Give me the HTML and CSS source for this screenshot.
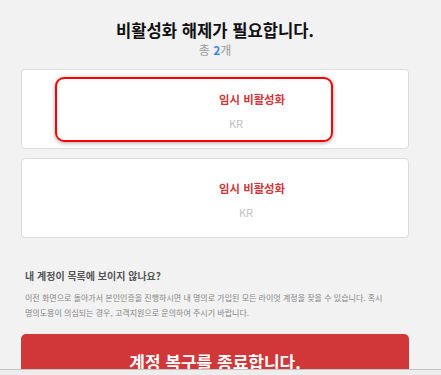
FILE: index.html
```html
<!DOCTYPE html>
<html lang="ko">
<head>
  <meta charset="UTF-8" />
  <meta name="viewport" content="width=device-width, initial-scale=1.0"/>
  <title>계정 복구</title>
  <link rel="stylesheet" href="styles.css">
</head>
<body>

  <main class="page">
    <h1 class="title">비활성화 해제가 필요합니다.</h1>
    <p class="count">총 <b>2</b>개</p>

    <ul class="accounts">
      <li class="account">
        <div class="account-thumb"></div>
        <div class="account-info">
          <span class="status">임시 비활성화</span>
          <span class="tag tag-first">KR</span>
        </div>
        <div class="highlight"></div>
      </li>
      <li class="account">
        <div class="account-thumb"></div>
        <div class="account-info">
          <span class="status">임시 비활성화</span>
          <span class="tag tag-second">KR</span>
        </div>
      </li>
    </ul>

    <section class="help">
      <h2>내 계정이 목록에 보이지 않나요?</h2>
      <p>이전 화면으로 돌아가서 본인인증을 진행하시면 내 명의로 가입된 모든 라이엇 계정을 찾을 수 있습니다. 혹시 명의도용이 의심되는 경우, 고객지원으로 문의하여 주시기 바랍니다.</p>
    </section>

    <button class="quit-btn">계정 복구를 종료합니다.</button>
  </main>

  <div class="scroll-track"></div>

</body>
</html>
```

FILE: styles.css
```css
body, html {
  margin: 0;
  padding: 0;
  height: 100%;
  overflow: hidden;
  background: #f2f2f2;
  font-family: "Noto Sans CJK KR", "Noto Sans", sans-serif;
}

.page {
  padding: 18px 32px 0 21px;
  display: flex;
  flex-direction: column;
}

.title {
  margin: 0;
  font-size: 16.6px;
  line-height: 24px;
  font-weight: 700;
  color: #111;
  text-align: center;
}

.count {
  margin: 0;
  font-size: 12px;
  line-height: 16px;
  color: #999;
  text-align: center;
}

.count b {
  color: #3f86f0;
}

.accounts {
  list-style: none;
  margin: 11px 0 0;
  padding: 0;
  display: flex;
  flex-direction: column;
  gap: 9px;
}

.account {
  position: relative;
  height: 78px;
  background: #fff;
  border: 1px solid #dcdcdc;
  border-radius: 4px;
  display: grid;
  grid-template-columns: 197px 1fr;
}

.account-info {
  display: flex;
  flex-direction: column;
  align-items: flex-start;
  gap: 8px;
  padding-top: 21px;
}

.status {
  font-size: 11.4px;
  line-height: 16px;
  font-weight: 700;
  color: #d13639;
}

.tag {
  font-size: 11px;
  line-height: 16px;
  color: #bfbfbf;
}

.tag-first {
  margin-left: 10px;
}

.tag-second {
  margin-left: 20px;
}

/* annotation box around the first account */
.highlight {
  position: absolute;
  left: 33px;
  top: 7px;
  width: 274px;
  height: 61px;
  border: 2px solid #f00;
  border-radius: 9px;
  box-shadow: 0 1px 4px rgba(0,0,0,0.35);
}

.help {
  padding: 30px 4px 0;
}

.help h2 {
  margin: 0;
  font-size: 10px;
  line-height: 16px;
  font-weight: 700;
  color: #555;
}

.help p {
  margin: 6px 0 0;
  max-width: 362px;
  font-size: 8px;
  line-height: 15px;
  color: #858585;
}

.quit-btn {
  margin-top: 14px;
  height: 60px;
  padding: 0 0 6px;
  border: none;
  border-radius: 5px;
  background: #d13639;
  color: #fff;
  font-family: inherit;
  font-size: 17px;
  font-weight: 700;
}

.scroll-track {
  position: fixed;
  left: 0;
  right: 0;
  bottom: 0;
  height: 5px;
  background: #ededed;
  border-top: 1px solid #c4c4c4;
}
```
